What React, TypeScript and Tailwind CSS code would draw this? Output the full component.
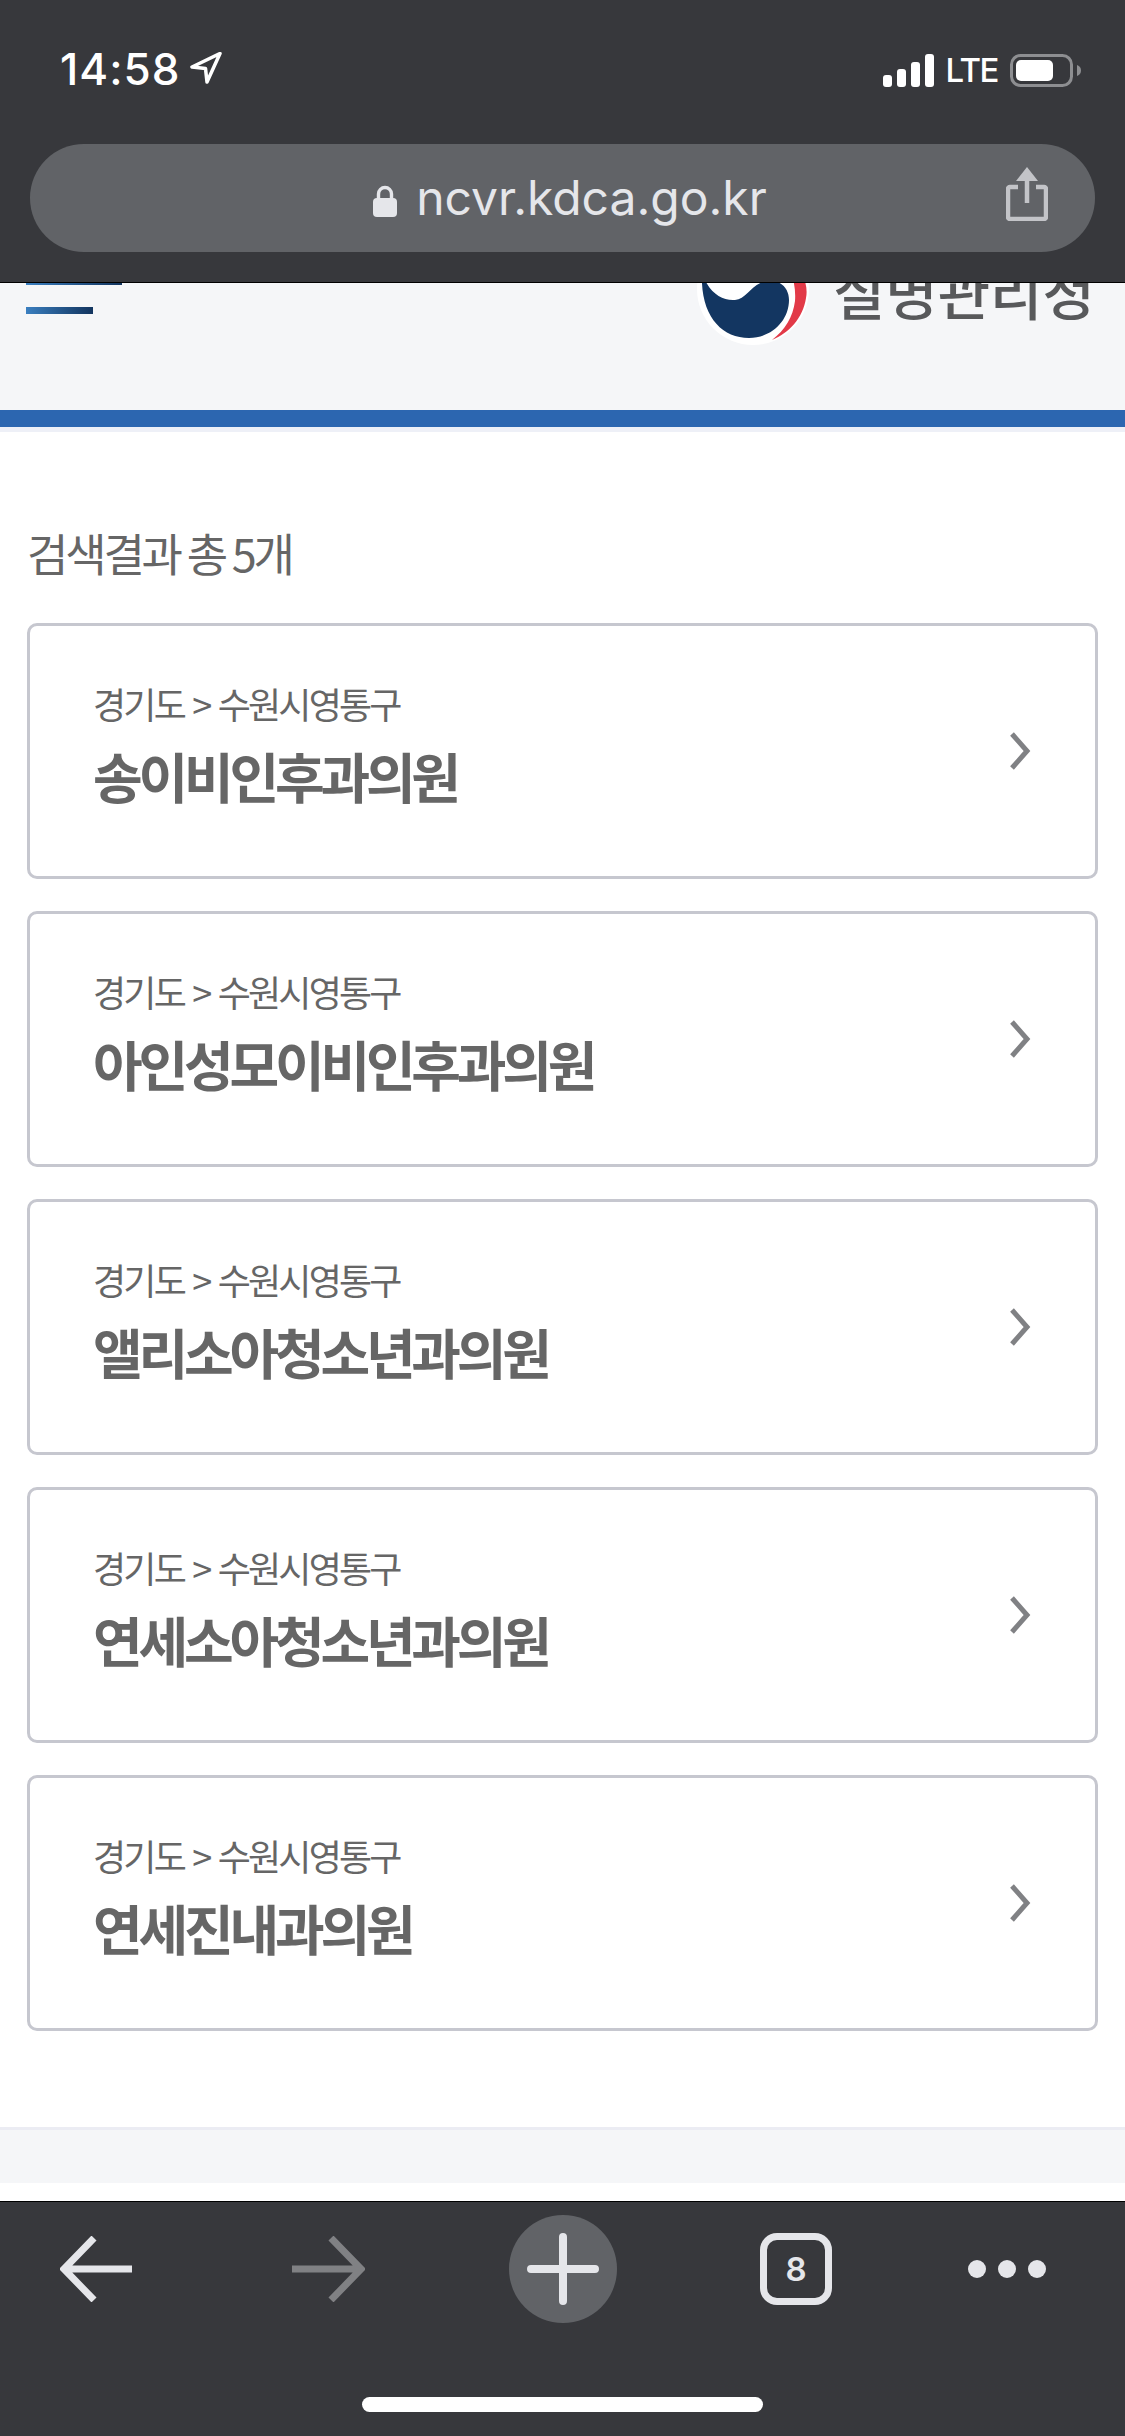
const KR = "font-['Noto_Sans_CJK_KR','Noto_Sans',sans-serif]";

const items = ["송이비인후과의원", "아인성모이비인후과의원", "앨리소아청소년과의원", "연세소아청소년과의원", "연세진내과의원"];

function StatusBar() {
  return (
    <div className="flex h-[144px] items-start justify-between pl-[60px] pr-[44px] pt-[47px]">
      <div className="flex items-center gap-[10px]">
        <span className="font-['Inter',sans-serif] text-[44px] font-medium leading-[44px] tracking-[1px] text-white">14:58</span>
        <svg width="32" height="32" viewBox="0 0 32 32" className="mt-[-2px]">
          <path d="M30 1.5 L2 15 L15.5 16.5 L17 30 Z" fill="none" stroke="#fff" strokeWidth="3.5" strokeLinejoin="round" />
        </svg>
      </div>
      <div className="flex items-center gap-[12px] pt-[5px]">
        <svg width="51" height="33" viewBox="0 0 51 33" fill="#fff">
          <rect x="0" y="21" width="9" height="12" rx="3" />
          <rect x="14" y="15" width="9" height="18" rx="3" />
          <rect x="28" y="8" width="9" height="25" rx="3" />
          <rect x="42" y="0" width="9" height="33" rx="3" />
        </svg>
        <span className="font-['Inter',sans-serif] text-[33px] font-medium leading-[36px] tracking-[-1.5px] text-white">LTE</span>
        <svg width="71" height="33" viewBox="0 0 71 33">
          <rect x="1.5" y="1.5" width="60" height="30" rx="9" fill="none" stroke="#8d8e91" strokeWidth="3" />
          <rect x="6" y="6" width="37" height="21" rx="5" fill="#fff" />
          <path d="M67 11 C70 12 71 14 71 16.5 C71 19 70 21 67 22 Z" fill="#8d8e91" />
        </svg>
      </div>
    </div>
  );
}

function UrlBar() {
  return (
    <div className="relative mx-[30px] flex h-[108px] items-center justify-center rounded-[54px] bg-[#616367] pl-[15px]">
      <svg width="24" height="32" viewBox="0 0 24 32" className="mr-[19px] mt-[6px]">
        <path d="M5.5 14 V9 a6.5 6.5 0 0 1 13 0 V14" fill="none" stroke="#e5e6ea" strokeWidth="3.4" />
        <rect x="0" y="13" width="24" height="19" rx="4" fill="#e5e6ea" />
      </svg>
      <span className="font-['Inter',sans-serif] text-[48px] font-normal leading-[60px] tracking-[0px] text-[#e5e6ea]">ncvr.kdca.go.kr</span>
      <svg width="42" height="54" viewBox="0 0 42 54" className="absolute right-[47px] top-[23px]">
        <path d="M12 20 H4 a2 2 0 0 0 -2 2 V50 a2 2 0 0 0 2 2 H38 a2 2 0 0 0 2 -2 V22 a2 2 0 0 0 -2 -2 H30" fill="none" stroke="#c3c4c8" strokeWidth="4.5" />
        <path d="M21 6 V36" stroke="#c3c4c8" strokeWidth="4.5" />
        <path d="M21 0 L32 14 H10 Z" fill="#c3c4c8" />
      </svg>
    </div>
  );
}

function Header() {
  return (
    <div className="flex h-[127px] justify-between overflow-hidden bg-[#f5f6f8]">
      <div className="flex flex-col pl-[26px]">
        <div className="h-[2px] w-[96px] bg-gradient-to-r from-[#3a7fc0] to-[#13355f]" />
        <div className="mt-[22px] h-[7px] w-[67px] bg-gradient-to-r from-[#3a7fc0] to-[#13355f]" />
      </div>
      <div className="mt-[-50px] flex items-start pr-[30px]">
        <svg width="112" height="112" viewBox="0 0 112 112" className="mr-[24px]">
          <circle cx="56" cy="56" r="56" fill="#fff" />
          <path d="M100 30 C108 45 111 55 109 65 C106 85 92 100 75 107 C88 97 96 84 98 68 C99 55 96 42 90 30 Z" fill="#e23a48" />
          <path d="M5 40 C12 60 25 68 38 67 C50 66 55 50 70 48 C84 46 92 56 92 67 C92 88 74 105 52 105 C24 105 3 82 5 40 Z" fill="#133661" />
        </svg>
        <span className={`${KR} text-[57px] font-medium leading-[114px] tracking-[0px] text-[#58595b]`}>질병관리청</span>
      </div>
    </div>
  );
}

function Card({ name }: { name: string }) {
  return (
    <div className="flex h-[256px] items-center justify-between rounded-[10px] border-[3px] border-[#c6c7cf] bg-white pl-[63px] pr-[64px]">
      <div className="flex flex-col pb-[14px]">
        <span className={`${KR} text-[36px] font-normal leading-[48px] tracking-[-2.8px] text-[#666] [word-spacing:3px]`}>경기도 &gt; 수원시영통구</span>
        <span className={`${KR} mt-[16px] text-[54px] font-bold leading-[66px] tracking-[-4.2px] text-[#666]`}>{name}</span>
      </div>
      <svg width="22" height="38" viewBox="0 0 22 38" className="mt-[-1px]">
        <path d="M3 2 L18 19 L3 36" fill="none" stroke="#808184" strokeWidth="5" />
      </svg>
    </div>
  );
}

function BottomBar() {
  return (
    <div className="flex h-[235px] flex-col border-t border-black bg-[#37383c]">
      <div className="flex h-[134px] items-center pl-[60px]">
        <svg width="72" height="66" viewBox="0 0 72 66">
          <path d="M34 2 L4 33 L34 64 M4 33 H72" fill="none" stroke="#e5e6ea" strokeWidth="7" />
        </svg>
        <svg width="73" height="66" viewBox="0 0 73 66" className="ml-[160px]">
          <path d="M39 2 L69 33 L39 64 M69 33 H0" fill="none" stroke="#808184" strokeWidth="7" />
        </svg>
        <div className="ml-[144px] flex h-[108px] w-[108px] items-center justify-center rounded-full bg-[#616367]">
          <svg width="72" height="72" viewBox="0 0 72 72">
            <path d="M36 4 V68 M4 36 H68" fill="none" stroke="#e5e6ea" strokeWidth="8" strokeLinecap="round" />
          </svg>
        </div>
        <div className="ml-[143px] flex h-[72px] w-[72px] items-center justify-center rounded-[17px] border-[7px] border-[#e5e6ea]">
          <span className="font-['Inter',sans-serif] text-[33px] font-semibold leading-none text-[#e5e6ea]">8</span>
        </div>
        <div className="ml-[136px] flex gap-[12px]">
          <div className="h-[18px] w-[18px] rounded-full bg-[#e5e6ea]" />
          <div className="h-[18px] w-[18px] rounded-full bg-[#e5e6ea]" />
          <div className="h-[18px] w-[18px] rounded-full bg-[#e5e6ea]" />
        </div>
      </div>
      <div className="mt-[61px] h-[15px] w-[401px] self-center rounded-full bg-white" />
    </div>
  );
}

export default function App() {
  return (
    <div className="flex h-[2436px] w-[1125px] flex-col overflow-hidden bg-white">
      <div className="h-[283px] border-b border-black bg-[#37383c]">
        <StatusBar />
        <UrlBar />
      </div>
      <Header />
      <div className="h-[22px] border-b-[5px] border-[#eef0f7] bg-[#2c66b0]" />
      <div className="flex flex-1 flex-col">
        <div className="px-[27px] pt-[95px]">
          <div className={`${KR} text-[45px] font-normal leading-[52px] tracking-[-3.2px] text-[#666]`}>검색결과 총 5개</div>
          <div className="mt-[44px] flex flex-col gap-[32px]">
            {items.map((n) => (
              <Card key={n} name={n} />
            ))}
          </div>
        </div>
        <div className="mt-auto flex h-[74px] flex-col">
          <div className="h-[56px] border-t-[3px] border-[#ebecf3] bg-[#f5f6f8]" />
        </div>
      </div>
      <BottomBar />
    </div>
  );
}
